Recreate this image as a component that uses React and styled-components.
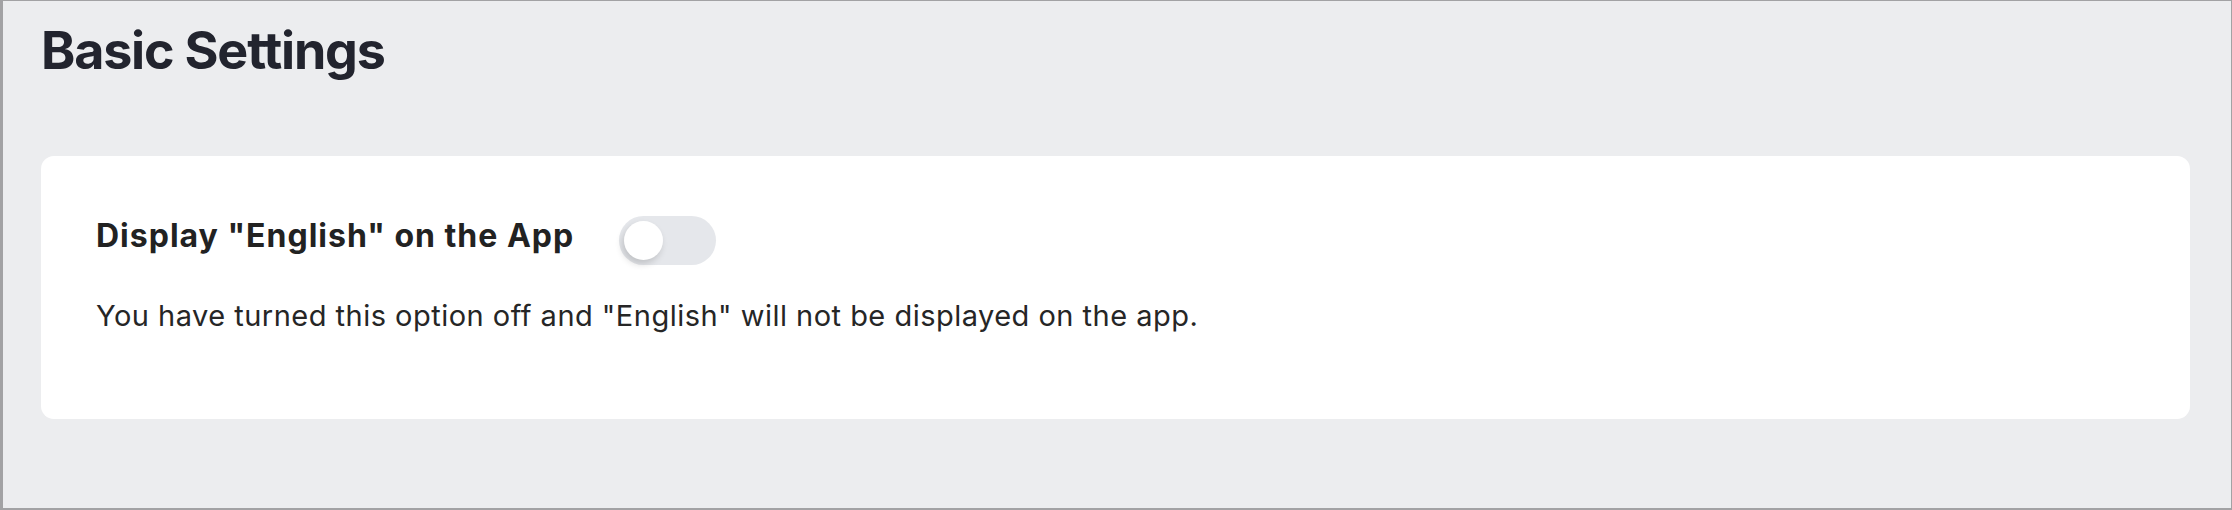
import React, { useState } from 'react';
import styled, { createGlobalStyle } from 'styled-components';

const GlobalStyle = createGlobalStyle`
  html, body {
    margin: 0;
    padding: 0;
    background: #ffffff;
  }
  body {
    font-family: Inter, "Noto Sans", "Liberation Sans", sans-serif;
    -webkit-font-smoothing: antialiased;
  }
`;

const Frame = styled.div`
  box-sizing: border-box;
  width: 2232px;
  height: 510px;
  border-style: solid;
  border-color: #a2a2a4;
  border-width: 1px 1px 2px 3px;
  background: #ecedef;
  padding: 19px 41px 0 38px;
  display: flex;
  flex-direction: column;
`;

const Title = styled.h1`
  margin: 0;
  font-size: 52px;
  line-height: 62px;
  font-weight: 700;
  letter-spacing: -1.2px;
  color: #22242e;
`;

const Card = styled.section`
  margin-top: 74px;
  background: #ffffff;
  border-radius: 13px;
  padding: 60px 55px 86px;
  display: flex;
  flex-direction: column;
  gap: 33px;
`;

const Row = styled.div`
  display: flex;
  align-items: center;
  gap: 45px;
`;

const Label = styled.span`
  font-size: 32px;
  line-height: 32px;
  font-weight: 700;
  letter-spacing: 1px;
  color: #222222;
  margin-bottom: 9px;
`;

const Track = styled.button`
  box-sizing: border-box;
  width: 97px;
  height: 49px;
  padding: 0 5px;
  border: none;
  border-radius: 999px;
  background: ${(p) => (p.$on ? '#22c55e' : '#e5e7eb')};
  display: flex;
  align-items: center;
  justify-content: ${(p) => (p.$on ? 'flex-end' : 'flex-start')};
  cursor: pointer;
`;

const Knob = styled.span`
  width: 39px;
  height: 39px;
  border-radius: 50%;
  background: #ffffff;
  box-shadow: -2px 4px 7px rgba(0, 0, 0, 0.16);
`;

const Description = styled.p`
  margin: 0;
  font-size: 29px;
  font-weight: 400;
  letter-spacing: 0.48px;
  color: #262626;
`;

export default function App() {
  const [on, setOn] = useState(false);
  return (
    <>
      <GlobalStyle />
      <Frame>
        <Title>Basic Settings</Title>
        <Card>
          <Row>
            <Label>Display "English" on the App</Label>
            <Track $on={on} onClick={() => setOn(!on)} aria-pressed={on}>
              <Knob />
            </Track>
          </Row>
          <Description>
            {on
              ? 'You have turned this option on and "English" will be displayed on the app.'
              : 'You have turned this option off and "English" will not be displayed on the app.'}
          </Description>
        </Card>
      </Frame>
    </>
  );
}
